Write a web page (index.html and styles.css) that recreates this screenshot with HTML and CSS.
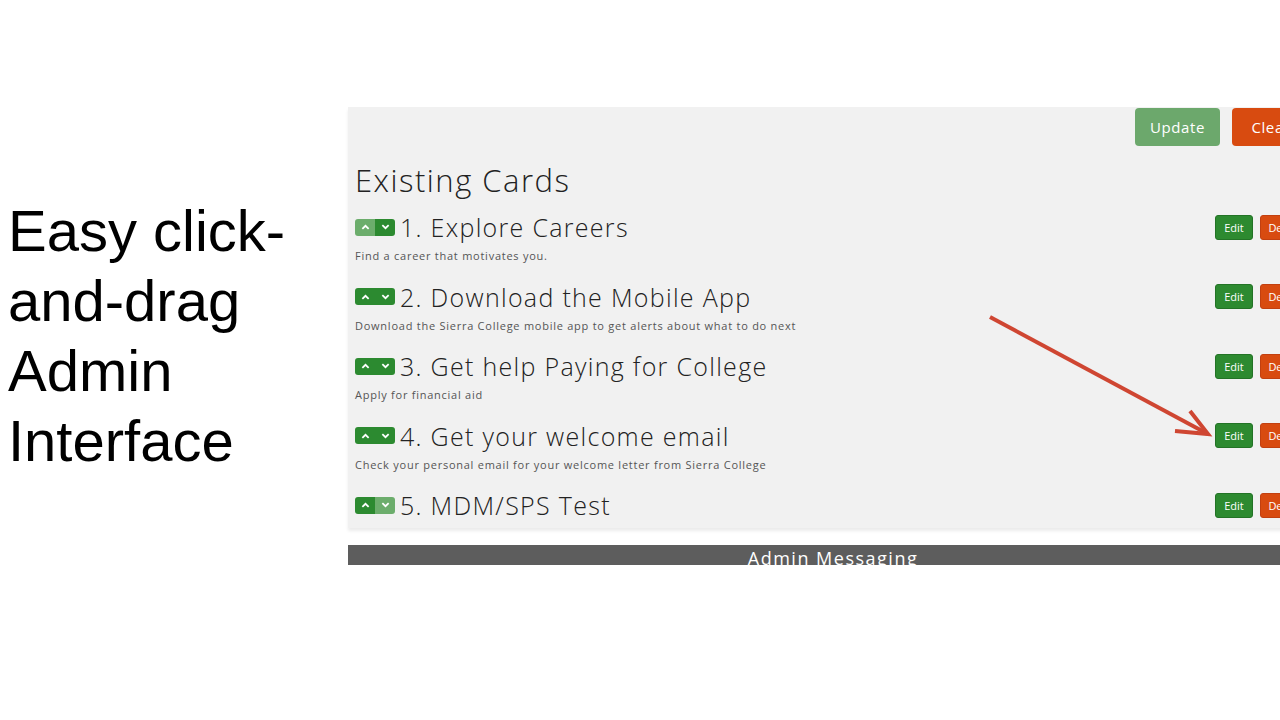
FILE: index.html
```html
<!DOCTYPE html>
<html>
<head>
<meta charset="utf-8">
<link rel="stylesheet" href="styles.css">
</head>
<body>
<div class="slide">
  <div class="caption">Easy click-<br>and-drag<br>Admin<br>Interface</div>
  <div class="shot">
    <div class="panel">
      <div class="toolbar">
        <button class="btn btn-update">Update</button>
        <button class="btn btn-clear">Clear</button>
      </div>
      <h2 class="heading">Existing Cards</h2>
      <div class="cards">
        <div class="card">
          <div class="card-line">
            <span class="mover"><span class="mv up off"><svg viewBox="0 0 10 6"><path d="M1.5 5 L5 1.6 L8.5 5"/></svg></span><span class="mv down"><svg viewBox="0 0 10 6"><path d="M1.5 1 L5 4.4 L8.5 1"/></svg></span></span>
            <span class="card-title">1. Explore Careers</span>
            <span class="actions"><button class="sbtn edit">Edit</button><button class="sbtn del">Delete</button></span>
          </div>
          <div class="card-desc">Find a career that motivates you.</div>
        </div>
        <div class="card">
          <div class="card-line">
            <span class="mover"><span class="mv up"><svg viewBox="0 0 10 6"><path d="M1.5 5 L5 1.6 L8.5 5"/></svg></span><span class="mv down"><svg viewBox="0 0 10 6"><path d="M1.5 1 L5 4.4 L8.5 1"/></svg></span></span>
            <span class="card-title">2. Download the Mobile App</span>
            <span class="actions"><button class="sbtn edit">Edit</button><button class="sbtn del">Delete</button></span>
          </div>
          <div class="card-desc">Download the Sierra College mobile app to get alerts about what to do next</div>
        </div>
        <div class="card">
          <div class="card-line">
            <span class="mover"><span class="mv up"><svg viewBox="0 0 10 6"><path d="M1.5 5 L5 1.6 L8.5 5"/></svg></span><span class="mv down"><svg viewBox="0 0 10 6"><path d="M1.5 1 L5 4.4 L8.5 1"/></svg></span></span>
            <span class="card-title">3. Get help Paying for College</span>
            <span class="actions"><button class="sbtn edit">Edit</button><button class="sbtn del">Delete</button></span>
          </div>
          <div class="card-desc">Apply for financial aid</div>
        </div>
        <div class="card">
          <div class="card-line">
            <span class="mover"><span class="mv up"><svg viewBox="0 0 10 6"><path d="M1.5 5 L5 1.6 L8.5 5"/></svg></span><span class="mv down"><svg viewBox="0 0 10 6"><path d="M1.5 1 L5 4.4 L8.5 1"/></svg></span></span>
            <span class="card-title">4. Get your welcome email</span>
            <span class="actions"><button class="sbtn edit">Edit</button><button class="sbtn del">Delete</button></span>
          </div>
          <div class="card-desc">Check your personal email for your welcome letter from Sierra College</div>
        </div>
        <div class="card last">
          <div class="card-line">
            <span class="mover"><span class="mv up"><svg viewBox="0 0 10 6"><path d="M1.5 5 L5 1.6 L8.5 5"/></svg></span><span class="mv down off"><svg viewBox="0 0 10 6"><path d="M1.5 1 L5 4.4 L8.5 1"/></svg></span></span>
            <span class="card-title">5. MDM/SPS Test</span>
            <span class="actions"><button class="sbtn edit">Edit</button><button class="sbtn del">Delete</button></span>
          </div>
        </div>
      </div>
    </div>
    <div class="admin-bar"><span>Admin Messaging</span></div>
  </div>
</div>
<svg class="arrow" width="260" height="150" viewBox="0 0 260 150">
  <g stroke="#cf4632" stroke-width="4" stroke-linecap="butt" fill="none">
    <path d="M20 17 L236 133"/>
    <path d="M205 131 L238 134 L220 111"/>
  </g>
</svg>
</body>
</html>
```

FILE: styles.css
```css
html, body {
  margin: 0;
  padding: 0;
  background: #ffffff;
  width: 1280px;
  height: 720px;
  overflow: hidden;
}

.slide {
  display: flex;
  width: 1280px;
  height: 720px;
  overflow: hidden;
}

.caption {
  flex: 0 0 340px;
  padding: 196px 0 0 8px;
  font-family: "Liberation Sans", Arial, sans-serif;
  font-size: 58px;
  line-height: 70px;
  color: #000;
}

.shot {
  flex: 0 0 970px;
  padding-top: 107px;
  font-family: "Open Sans", sans-serif;
}

.panel {
  background: #f1f1f1;
  padding: 1px 8px 5px 7px;
  box-shadow: 0 3px 3px rgba(0,0,0,0.08);
}

.toolbar {
  display: flex;
  justify-content: flex-end;
  gap: 12px;
  height: 38px;
}

.btn {
  font-family: "Open Sans", sans-serif;
  font-size: 15px;
  letter-spacing: 0.6px;
  color: #fff;
  border: none;
  border-radius: 4px;
  height: 38px;
  padding: 0;
}

.btn-update {
  background: #6ca86c;
  width: 85px;
}

.btn-clear {
  background: #d84b10;
  width: 78px;
}

.heading {
  margin: 14px 0 0 0;
  height: 40px;
  line-height: 40px;
  font-size: 31px;
  font-weight: 300;
  color: #222;
  letter-spacing: 1.5px;
}

.cards {
  margin-top: 9px;
}

.card {
  height: 69.5px;
}

.card.last {
  height: 36px;
}

.card-line {
  display: flex;
  align-items: center;
  height: 36px;
}

.mover {
  display: flex;
  width: 40px;
  height: 17px;
  border-radius: 3px;
  overflow: hidden;
  margin-right: 5px;
}

.mv {
  flex: 1;
  display: flex;
  align-items: center;
  justify-content: center;
  background: #2c8a30;
}

.mv.off {
  background: #6cad6c;
}

.mv svg {
  width: 9px;
  height: 6px;
  fill: none;
  stroke: #fff;
  stroke-width: 2;
}

.card-title {
  font-size: 25px;
  font-weight: 300;
  color: #222;
  letter-spacing: 1.3px;
  flex: 1;
}

.actions {
  display: flex;
  gap: 7px;
}

.sbtn {
  font-family: "Open Sans", sans-serif;
  font-size: 11px;
  color: #fff;
  border-radius: 3px;
  height: 25px;
  padding: 0;
}

.sbtn.edit {
  width: 38px;
  background: #2d8a30;
  border: 1px solid #237326;
}

.sbtn.del {
  width: 50px;
  background: #d84b10;
  border: 1px solid #c24010;
}

.card-desc {
  font-size: 11px;
  line-height: 18px;
  color: #555;
  letter-spacing: 0.75px;
  margin-top: 2px;
}

.admin-bar {
  margin-top: 17px;
  height: 20px;
  background: #5d5d5d;
  overflow: hidden;
  text-align: center;
}

.admin-bar span {
  display: block;
  font-size: 18px;
  line-height: 20px;
  color: #fff;
  letter-spacing: 1.5px;
  padding-top: 3px;
}

.arrow {
  position: absolute;
  left: 970px;
  top: 300px;
}
```
